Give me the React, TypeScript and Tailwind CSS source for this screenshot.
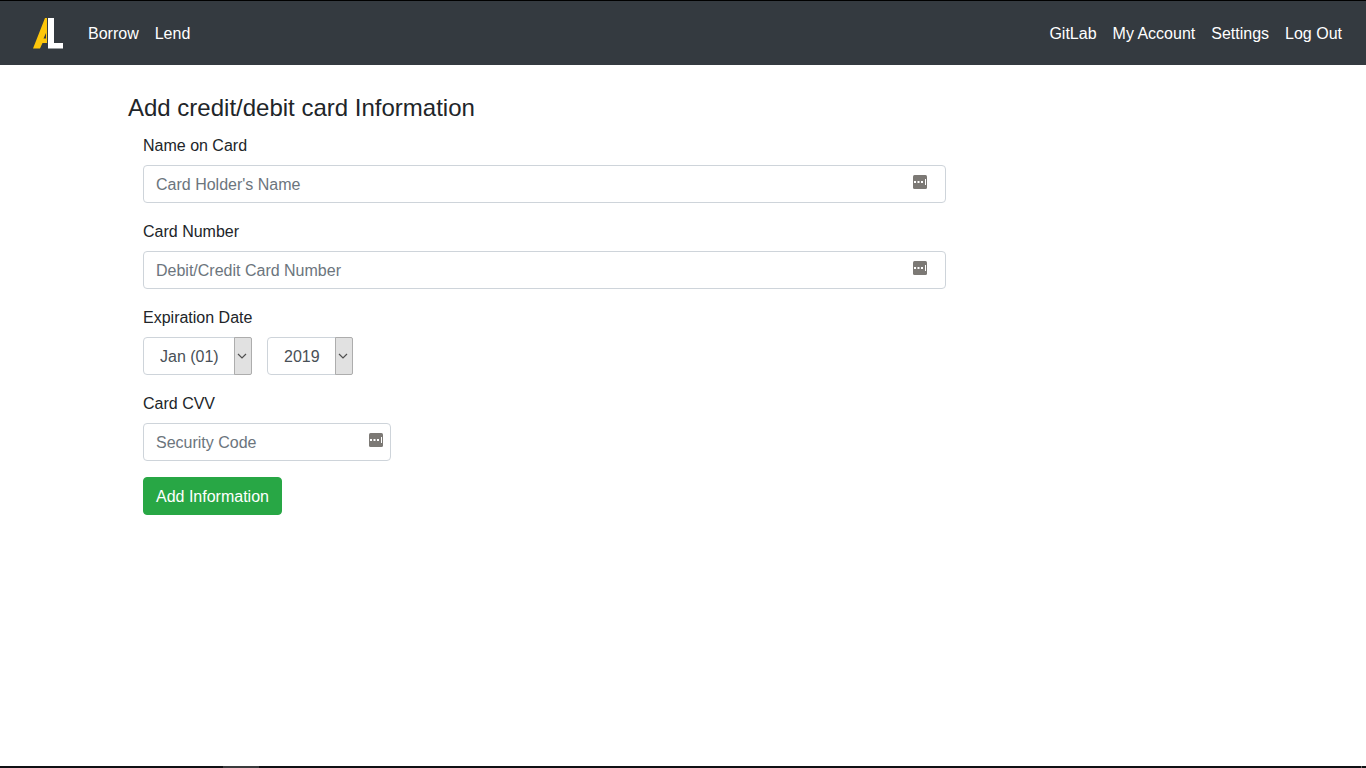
import { ReactNode } from 'react'

const navLeft = ['Borrow', 'Lend']
const navRight = ['GitLab', 'My Account', 'Settings', 'Log Out']

const months = ['Jan (01)', 'Feb (02)', 'Mar (03)', 'Apr (04)', 'May (05)', 'Jun (06)', 'Jul (07)', 'Aug (08)', 'Sep (09)', 'Oct (10)', 'Nov (11)', 'Dec (12)']
const years = ['2019', '2020', '2021', '2022', '2023', '2024', '2025']

function Logo() {
  return (
    <svg width="32" height="32" viewBox="0 0 32 32" aria-hidden="true">
      <path d="M15 0v25h-4.500L8 30.500H1L13 0z M14 15l-2.500 5.500H14z" fill="#fdc60b" fillRule="evenodd" />
      <path d="M16 0h6v25h9v5.500H16z" fill="#fff" />
    </svg>
  )
}

function NavLinks({ items }: { items: string[] }) {
  return (
    <ul className="flex gap-4">
      {items.map((item) => (
        <li key={item}>
          <a href="#" className="text-white">{item}</a>
        </li>
      ))}
    </ul>
  )
}

interface TextFieldProps {
  id: string
  label: string
  placeholder: string
  wrapperClass?: string
  iconClass: string
}

function TextField({ id, label, placeholder, wrapperClass = '', iconClass }: TextFieldProps) {
  return (
    <div className="mb-4">
      <label htmlFor={id} className="mb-[7px] block pt-px">{label}</label>
      <div className={`relative ${wrapperClass}`}>
        <input
          id={id}
          type="text"
          placeholder={placeholder}
          className="block h-[38px] w-full rounded border border-[#ced4da] bg-white px-3 pt-0.5 text-[#495057] placeholder:text-[#6c757d]"
        />
        {/* Password manager badge */}
        <svg width="14" height="14" viewBox="0 0 14 14" aria-hidden="true" className={`absolute top-[10px] ${iconClass}`}>
          <rect width="14" height="14" rx="1.5" fill="#7c7975" />
          <path d="M1 6h2v2H1zM4.500 6h2v2h-2zM8 6h2v2H8zM12 4h1v6h-1z" fill="#fff" />
        </svg>
      </div>
    </div>
  )
}

function SelectField({ label, options, widthClass }: { label: string; options: string[]; widthClass: string }) {
  return (
    <div className={`relative ${widthClass}`}>
      <select
        aria-label={label}
        className="block h-[38px] w-full appearance-none rounded border border-[#ced4da] bg-white pt-0.5 pr-[18px] pl-4 text-[#495057]"
      >
        {options.map((option) => (
          <option key={option}>{option}</option>
        ))}
      </select>
      <span className="pointer-events-none absolute inset-y-0 right-0 flex w-[18px] items-center justify-center rounded-r-xs border border-[#adadad] bg-[#e1e1e1] pr-0.5">
        <svg width="10" height="6" viewBox="0 0 10 6" fill="none" stroke="#505050" strokeWidth="1.2">
          <path d="M1 1l4 4 4-4" />
        </svg>
      </span>
    </div>
  )
}

function Page({ children }: { children: ReactNode }) {
  return (
    <div className="flex min-h-screen flex-col bg-white font-['Liberation_Sans',Arial,sans-serif] text-base text-[#212529]">
      {children}
    </div>
  )
}

export default function App() {
  return (
    <Page>
      <header className="flex h-[65px] items-center justify-between border-t border-black bg-[#343a40] px-6 pt-px">
        <div className="flex items-center gap-6">
          <a href="#" aria-label="Home" className="ml-2">
            <Logo />
          </a>
          <NavLinks items={navLeft} />
        </div>
        <NavLinks items={navRight} />
      </header>

      <main className="mx-auto w-full max-w-[1140px] grow px-[15px] pt-[29px]">
        <h1 className="mb-[11px] text-2xl leading-7">Add credit/debit card Information</h1>

        <form className="w-3/4 px-[15px]">
          <TextField id="card-name" label="Name on Card" placeholder="Card Holder's Name" iconClass="right-[19px]" />
          <TextField id="card-number" label="Card Number" placeholder="Debit/Credit Card Number" iconClass="right-[19px]" />

          <fieldset className="mb-4">
            <legend className="mb-[7px] pt-px">Expiration Date</legend>
            <div className="flex gap-[15px]">
              <SelectField label="Expiration month" options={months} widthClass="w-[109px]" />
              <SelectField label="Expiration year" options={years} widthClass="w-[86px]" />
            </div>
          </fieldset>

          <TextField id="card-cvv" label="Card CVV" placeholder="Security Code" wrapperClass="max-w-[248px]" iconClass="right-2" />

          <button type="button" className="h-[38px] rounded border border-[#28a745] bg-[#28a745] px-3 pt-px text-white">
            Add Information
          </button>
        </form>
      </main>

      <footer className="flex h-0.5 bg-[#101114] pl-[223px]">
        <div className="w-9 bg-[#3a3b3d]" />
        <div className="mr-1 ml-auto w-px bg-[#6b6b6b]" />
      </footer>
    </Page>
  )
}
